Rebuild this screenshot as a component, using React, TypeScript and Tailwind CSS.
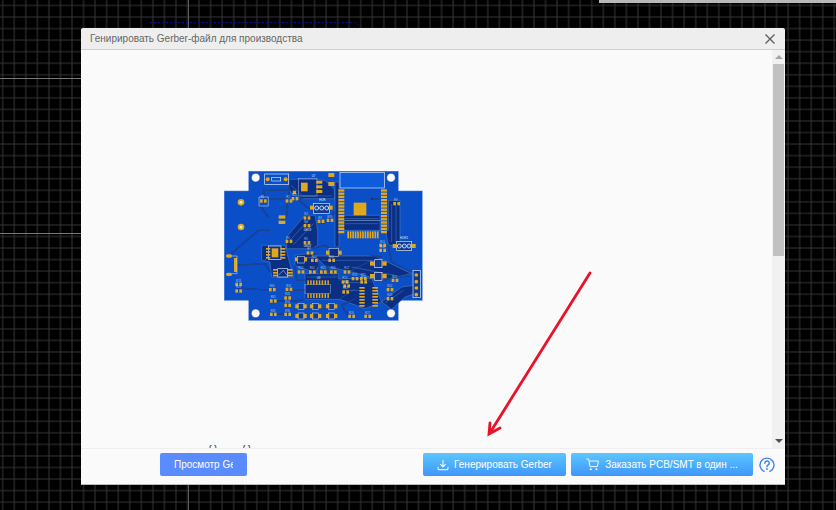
const font = { fontFamily: '"Liberation Sans", Arial, sans-serif' };

// board drawing, coordinates follow the board image at 3x
const GOLD = '#e0a81c';
const SILK = '#dfe9f5';
const NAVY = '#0a2f85';

const pours = [
  '222,42 305,42 330,45 358,72 358,100 262,100 232,88 222,70',
  '385,150 495,150 495,198 512,198 520,240 555,240 555,105 520,105 520,195 385,195',
  '215,215 270,150 300,150 308,195 308,240 290,250 215,250',
  '140,240 210,240 222,285 235,335 170,335 165,290 140,285',
  '270,325 370,325 370,340 470,340 500,410 450,430 375,402 270,402',
  '300,272 480,272 590,325 500,345 420,322 330,302',
  '500,410 560,365 598,360 598,385 570,395 530,432',
  '240,270 300,262 312,300 300,322 240,300',
  '360,50 372,50 372,245 360,245',
];

const traces = [
  '48,265 130,195 165,195',
  '60,300 150,295 165,318 190,322',
  '65,368 170,375',
  '250,105 295,140',
  '135,120 160,155',
  '215,115 215,150 195,175',
  '362,245 362,270',
  '300,262 312,300 312,330',
  '225,375 270,375',
  '175,407 240,407 270,402',
  '175,447 218,447',
  '235,430 345,430',
  '420,400 380,420 400,450',
  '465,270 500,275',
  '500,345 585,330',
  '230,95 262,100',
  '147,100 222,100',
  '222,42 222,100',
  '320,175 340,165 360,140',
  '290,250 330,240 350,255',
  '240,300 245,345 270,345',
  '370,345 420,330 470,350',
  '375,400 420,372',
  '520,240 530,290 590,320',
  '400,320 440,300 470,285',
  '335,300 345,325 370,335',
  '465,100 495,100',
  '150,95 147,75 222,75',
];

// thin lines running inside the dark areas
const inner = [
  '228,60 262,92 350,92',
  '390,160 490,160',
  '390,175 490,175',
  '530,115 530,230',
  '543,120 543,232',
  '225,225 280,165',
  '235,238 295,175',
  '275,335 365,335',
  '380,352 460,352',
  '385,375 430,375',
  '320,285 475,285',
  '410,305 540,330',
  '510,412 565,375',
  '175,250 150,285',
  '250,280 300,275',
];

const hPads: [number, number][] = [
  [145, 107], [222, 107], [276, 158], [276, 181], [276, 232], [222, 228], [285, 263], [318, 168],
  [545, 115], [503, 240], [503, 255], [350, 285], [258, 320], [292, 320], [325, 320], [355, 320],
  [396, 320], [420, 340], [446, 350], [390, 350], [395, 362], [392, 380], [445, 340], [525, 373],
  [525, 400], [410, 453], [458, 453], [71, 357], [71, 377], [172, 373], [222, 372], [218, 398],
  [175, 407], [218, 420], [175, 447], [218, 447], [540, 345], [240, 100], [345, 165], [298, 285],
];

const capPads: [number, number][] = [
  [258, 423], [258, 452], [302, 423], [302, 452], [350, 423], [350, 452],
];

const labels: [number, number, string][] = [
  [290, 34, 'U7'], [312, 107, 'HDR'], [266, 196, 'LED3'], [266, 246, 'LED2'],
  [305, 340, 'U6'], [555, 222, 'HDR1'],
];

function range(n: number) {
  return Array.from({ length: n }, (_, i) => i);
}

function Ring({ cx, cy }: { cx: number; cy: number }) {
  return <circle cx={cx} cy={cy} r={6} fill="#1a4ea8" stroke={SILK} strokeWidth={2.5} />;
}

function Board() {
  return (
    <svg viewBox="27 17 597 450" className="h-[150px] w-[199px]">
      <path
        d="M100 17H551V76H623V406H551V466H100V406H27V76H100Z"
        fill="#0a4fc8"
        stroke="#dfe6f2"
        strokeWidth={1.5}
      />
      {pours.map((p) => (
        <polygon key={p} points={p} fill={NAVY} stroke="#5d86bd" strokeWidth={1.5} />
      ))}
      {traces.map((p) => (
        <polyline key={p} points={p} fill="none" stroke={NAVY} strokeWidth={4} />
      ))}
      {traces.map((p) => (
        <polyline key={`l${p}`} points={p} fill="none" stroke="#4c78b4" strokeWidth={1} />
      ))}
      {inner.map((p) => (
        <polyline key={p} points={p} fill="none" stroke="#3f6cb4" strokeWidth={2} />
      ))}

      {[[122, 37], [528, 37], [122, 444], [528, 444]].map(([x, y]) => (
        <circle key={`${x}-${y}`} cx={x} cy={y} r={13} fill="#fafafa" stroke="#0a2a70" strokeWidth={1.5} />
      ))}
      {[[78, 111], [78, 185]].map(([x, y]) => (
        <g key={y}>
          <circle cx={x} cy={y} r={10} fill={GOLD} />
          <circle cx={x} cy={y} r={4.5} fill="#f6edd2" />
        </g>
      ))}

      {/* top connector */}
      <rect x={149} y={26} width={72} height={32} fill="none" stroke={SILK} strokeWidth={2} />
      <rect x={170} y={36} width={27} height={11} fill="none" stroke={SILK} strokeWidth={2} />
      <circle cx={158} cy={42} r={6} fill={GOLD} />
      <circle cx={212} cy={42} r={6} fill={GOLD} />

      {/* wifi module */}
      <rect x={375} y={22} width={133} height={46} fill="#0d5cdc" stroke={SILK} strokeWidth={2} />
      {range(14).map((i) => (
        <g key={i}>
          <rect x={370} y={72 + i * 9.6} width={18} height={7} fill={GOLD} />
          <rect x={498} y={72 + i * 9.6} width={18} height={7} fill={GOLD} />
        </g>
      ))}
      {range(13).map((i) => (
        <rect key={i} x={397 + i * 7.4} y={198} width={5} height={21} fill={GOLD} />
      ))}
      <rect x={416} y={112} width={38} height={38} fill={GOLD} />
      <rect x={388} y={165} width={108} height={2} fill="#7f9ecb" />
      <circle cx={472} cy={100} r={3} fill={NAVY} />

      {/* regulator */}
      <rect x={258} y={52} width={20} height={26} fill={GOLD} />
      {[46, 60, 74].map((y) => (
        <rect key={y} x={304} y={y} width={18} height={9} fill={GOLD} />
      ))}
      <rect x={250} y={40} width={56} height={52} fill="none" stroke={SILK} strokeWidth={1} />
      <rect x={340} y={23} width={18} height={12} fill={GOLD} />
      <rect x={340} y={50} width={18} height={12} fill={GOLD} />
      <rect x={233} y={76} width={10} height={10} fill={GOLD} />

      {/* headers */}
      <rect x={295} y={114} width={48} height={30} fill="#123b90" stroke={SILK} strokeWidth={2} />
      <rect x={285} y={121} width={12} height={12} fill={GOLD} />
      <rect x={341} y={121} width={12} height={12} fill={GOLD} />
      {[305, 320, 335].map((x) => <Ring key={x} cx={x} cy={128} />)}
      <rect x={545} y={228} width={45} height={28} fill="#123b90" stroke={SILK} strokeWidth={2} />
      <rect x={533} y={236} width={12} height={12} fill={GOLD} />
      <rect x={590} y={236} width={12} height={12} fill={GOLD} />
      {[553, 568, 582].map((x) => <Ring key={x} cx={x} cy={242} />)}
      <rect x={594} y={315} width={22} height={82} fill="#123b90" stroke={SILK} strokeWidth={2} />
      {[329, 349, 368, 388].map((y) => (
        <circle key={y} cx={604} cy={y} r={5.5} fill={GOLD} />
      ))}

      {/* usb side */}
      <rect x={33} y={267} width={18} height={10} rx={5} fill={GOLD} />
      <rect x={33} y={322} width={18} height={10} rx={5} fill={GOLD} />
      <rect x={57} y={278} width={9} height={42} fill={GOLD} />
      <polyline points="50,272 66,272 66,325 50,325" fill="none" stroke={SILK} strokeWidth={1.5} />

      {/* QFN */}
      <rect x={160} y={242} width={38} height={40} fill={NAVY} stroke={SILK} strokeWidth={2} />
      <rect x={170} y={249} width={20} height={27} fill={GOLD} />
      {[250, 259, 268, 277].map((y) => (
        <g key={y}>
          <rect x={153} y={y - 2} width={13} height={5} fill={GOLD} />
          <rect x={196} y={y - 2} width={15} height={5} fill={GOLD} />
        </g>
      ))}

      {/* SOT parts */}
      <rect x={188} y={310} width={30} height={25} fill={NAVY} stroke={SILK} strokeWidth={2} />
      <polyline points="190,330 205,315 216,330" fill="none" stroke={SILK} strokeWidth={1.5} />
      {[313, 322, 330].map((y) => (
        <g key={y}>
          <rect x={219} y={y - 2} width={14} height={5} fill={GOLD} />
          <rect x={174} y={y - 2} width={13} height={5} fill={GOLD} />
        </g>
      ))}
      <rect x={248} y={273} width={20} height={20} fill={NAVY} stroke={SILK} strokeWidth={1.5} />
      <rect x={240} y={276} width={8} height={12} fill={GOLD} />
      <rect x={268} y={276} width={8} height={12} fill={GOLD} />
      <rect x={342} y={250} width={28} height={24} fill={NAVY} stroke={SILK} strokeWidth={1.5} />
      <rect x={333} y={256} width={10} height={12} fill={GOLD} />
      <rect x={370} y={256} width={10} height={12} fill={GOLD} />
      {[[490, 295], [490, 333]].map(([x, y]) => (
        <g key={y}>
          <rect x={x - 11} y={y - 12} width={22} height={24} fill="#123b90" stroke={SILK} strokeWidth={2} />
          <rect x={x - 25} y={y - 7} width={13} height={13} fill={GOLD} />
          <rect x={x + 12} y={y - 7} width={13} height={13} fill={GOLD} />
        </g>
      ))}

      {/* SOIC U6 */}
      <rect x={270} y={358} width={76} height={26} fill="none" stroke={SILK} strokeWidth={1} />
      {range(8).map((i) => (
        <g key={i}>
          <rect x={277 + i * 8.6} y={345} width={4.5} height={13} fill={GOLD} />
          <rect x={277 + i * 8.6} y={385} width={4.5} height={13} fill={GOLD} />
        </g>
      ))}

      {/* SOIC right */}
      {range(7).map((i) => (
        <g key={i}>
          <rect x={433} y={365 + i * 9} width={16} height={5} fill={GOLD} />
          <rect x={472} y={365 + i * 9} width={17} height={5} fill={GOLD} />
        </g>
      ))}

      {hPads.map(([x, y], i) => (
        <g key={`${x}-${y}`}>
          <rect x={x - 10} y={y - 5} width={8} height={10} fill={GOLD} />
          <rect x={x + 2} y={y - 5} width={8} height={10} fill={GOLD} />
          <text x={x - 8} y={y - 8} fontSize={8} fill={SILK} opacity={0.7} fontFamily="Liberation Sans">
            {`R${i + 1}`}
          </text>
        </g>
      ))}
      {capPads.map(([x, y]) => (
        <g key={`${x}-${y}`}>
          <rect x={x - 9} y={y - 9} width={18} height={18} fill="#123b90" stroke={SILK} strokeWidth={1.5} />
          <rect x={x - 17} y={y - 6} width={10} height={12} fill={GOLD} />
          <rect x={x + 7} y={y - 6} width={10} height={12} fill={GOLD} />
        </g>
      ))}
      <rect x={191} y={150} width={20} height={10} fill={GOLD} />
      <rect x={191} y={166} width={20} height={10} fill={GOLD} />
      <polyline points="132,95 160,95 160,122 132,122 132,95" fill="none" stroke={SILK} strokeWidth={1.5} />

      {labels.map(([x, y, t]) => (
        <text key={t} x={x} y={y} fontSize={9} fill={SILK} fontFamily="Liberation Sans">
          {t}
        </text>
      ))}
    </svg>
  );
}

function CanvasGrid() {
  return (
    <svg className="absolute inset-0 h-full w-full" width="836" height="510">
      <defs>
        <pattern id="grid" x="-3.1" y="-0.3" width="11.55" height="11.55" patternUnits="userSpaceOnUse">
          <path d="M5.78 0V11.55M0 5.8H11.55" fill="none" stroke="#363636" strokeWidth="1" />
        </pattern>
      </defs>
      <rect width="836" height="510" fill="url(#grid)" />
      <path d="M0 78.5H90M0 233.5H90" stroke="#777" strokeWidth="1" />
      <path d="M188.5 0V510" stroke="#5c5c5c" strokeWidth="1" />
      <path d="M150 22.5H356L362 30" fill="none" stroke="#0a0a96" strokeWidth="1" strokeDasharray="2 2" />
      <rect x="599" y="0" width="237" height="3" fill="#b9b9b9" />
    </svg>
  );
}

function DownloadIcon() {
  return (
    <svg width="12" height="12" viewBox="0 0 14 14" fill="none" stroke="#fff" strokeWidth="1.2" strokeLinecap="round" strokeLinejoin="round">
      <path d="M7 1.5V9M4.2 6.4 7 9.2l2.8-2.8" />
      <path d="M1.2 9.500V11a1.5 1.5 0 0 0 1.5 1.5h8.6A1.5 1.5 0 0 0 12.8 11V9.500" />
    </svg>
  );
}

function CartIcon() {
  return (
    <svg width="13" height="13" viewBox="0 0 13 13" fill="none" stroke="#fff" strokeWidth="0.9" strokeLinejoin="round">
      <path d="M0.3 1H2.6L4 8.6H11.3L12.5 3H3" />
      <circle cx="4.8" cy="11.2" r="1" fill="#fff" stroke="none" />
      <circle cx="10.4" cy="11.2" r="1" fill="#fff" stroke="none" />
    </svg>
  );
}

function HelpIcon() {
  return (
    <svg width="16" height="16" viewBox="0 0 16 16" fill="none" stroke="#3f83f0" strokeWidth="1.4" strokeLinecap="round">
      <path d="M5 14.4A7 7 0 1 1 11 14.4" />
      <path d="M5.8 6.2A2.2 2.2 0 1 1 8.8 8.2C8.2 8.6 8 9 8 9.8" />
      <circle cx="8" cy="12" r="0.9" fill="#3f83f0" stroke="none" />
    </svg>
  );
}

export default function App() {
  return (
    <div className="relative h-[510px] w-[836px] overflow-hidden bg-black pl-[81px] pt-[28px]" style={font}>
      <CanvasGrid />
      <div className="relative flex h-[456px] w-[704px] flex-col rounded-t-[3px] bg-[#fafafa] shadow-[0_1px_0_#bbb]">
        <div className="box-content flex h-[21px] shrink-0 items-center justify-between rounded-t-[3px] border-b border-[#cfcfcf] bg-[#eeeeee] pl-[9px] pr-[10px]">
          <span className="text-[10px] text-[#666]">Генирировать Gerber-файл для производства</span>
          <svg width="10" height="10" viewBox="0 0 10 10" className="mt-[1px]" stroke="#5f5f5f" strokeWidth="1.4">
            <path d="M0.5 0.5 9.5 9.5M9.5 0.5 0.5 9.5" />
          </svg>
        </div>

        <div className="flex min-h-0 flex-1">
          <div className="flex flex-1 flex-col overflow-hidden pl-[143px] pt-[121px]">
            <Board />
            <div className="ml-[-15px] mt-auto flex h-[3px] gap-[26px] overflow-hidden">
              <span className="text-[10px] leading-[8px] text-[#555]">О</span>
              <span className="text-[10px] leading-[8px] text-[#555]">О</span>
            </div>
          </div>
          <div className="flex w-[13px] shrink-0 flex-col items-center bg-[#f1f1f1]">
            <div className="mt-[5px] h-0 w-0 border-x-[4px] border-b-[4px] border-x-transparent border-b-[#a5a5a5]" />
            <div className="mt-[5px] h-[192px] w-[11px] bg-[#c1c1c1]" />
            <div className="mb-[5px] mt-auto h-0 w-0 border-x-[4px] border-t-[4px] border-x-transparent border-t-[#505050]" />
          </div>
        </div>

        <div className="flex h-[36px] shrink-0 items-center border-t border-[#eeeeee] pb-[4px] pl-[79px] pr-[10px]">
          <button className="flex h-[23px] w-[87px] items-center rounded-[2px] bg-[#5b8cff] px-[14px] text-[10px] text-white">
            <span className="overflow-hidden whitespace-nowrap">Просмотр Gerber</span>
          </button>
          <button className="ml-auto flex h-[23px] w-[143px] items-center justify-center gap-[5px] rounded-[2px] bg-gradient-to-b from-[#5cc6ff] to-[#3f96fb] text-[10px] text-white">
            <DownloadIcon />
            <span>Генерировать Gerber</span>
          </button>
          <button className="ml-[5px] flex h-[23px] w-[182px] items-center justify-center gap-[6px] rounded-[2px] bg-gradient-to-b from-[#5cc6ff] to-[#3f96fb] text-[10px] text-white">
            <CartIcon />
            <span>Заказать PCB/SMT в один ...</span>
          </button>
          <span className="ml-[6px] flex">
            <HelpIcon />
          </span>
        </div>

        {/* annotation arrow */}
        <svg className="absolute left-[400px] top-[240px]" width="115" height="175" fill="none" stroke="#e8132b" strokeWidth="2.8" strokeLinecap="round">
          <path d="M109 5 8.5 165.500M9 155 8 166 19 160" />
        </svg>
      </div>
    </div>
  );
}
